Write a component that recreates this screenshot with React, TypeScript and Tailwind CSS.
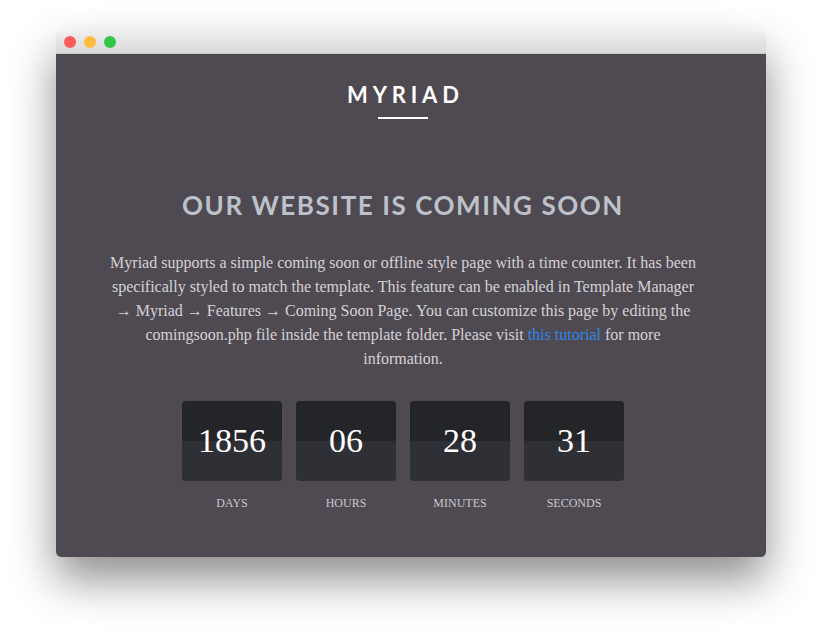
const counters = [
  { value: "1856", label: "Days" },
  { value: "06", label: "Hours" },
  { value: "28", label: "Minutes" },
  { value: "31", label: "Seconds" },
];

function CounterBox({ value, label }: { value: string; label: string }) {
  return (
    <div className="flex flex-col items-center">
      <div className="relative w-[100px] h-[80px] rounded-[4px] overflow-hidden flex flex-col">
        <div className="h-[40px] bg-[#242528]" />
        <div className="h-[40px] bg-[#2f3035]" />
        <span className="absolute inset-0 flex items-center justify-center text-white text-[34px] leading-none font-['Liberation_Serif',serif]">
          {value}
        </span>
      </div>
      <span className="mt-[13px] text-[12px] uppercase text-[#c9c8cd] font-['Liberation_Serif',serif]">
        {label}
      </span>
    </div>
  );
}

export default function App() {
  return (
    <div className="w-[822px] h-[637px] bg-white pl-[56px] pt-[31px]">
      <div className="w-[710px] h-[526px] rounded-[5px] overflow-hidden shadow-[0_22px_45px_rgba(0,0,0,0.45)] flex flex-col">
        {/* title bar */}
        <div className="h-[23px] bg-gradient-to-b from-[#efefef] to-[#d9d9d9] flex items-center gap-[8px] pl-[8px] border-b border-[#c8c8c8]">
          <span className="w-[12px] h-[12px] rounded-full bg-[#fc5b57]" />
          <span className="w-[12px] h-[12px] rounded-full bg-[#fdbc40]" />
          <span className="w-[12px] h-[12px] rounded-full bg-[#33c748]" />
        </div>

        {/* page */}
        <div className="flex-1 bg-[#4f4a51] flex flex-col items-center pt-[27px] pr-[16px]">
          <h1 className="text-white text-[22px] leading-[28px] font-bold tracking-[0.22em] pl-[0.22em] font-['Lato',sans-serif]">
            MYRIAD
          </h1>
          <div className="mt-[8px] w-[50px] h-[2px] bg-white" />

          <h2 className="mt-[70px] text-[#bdc1c9] text-[26px] leading-[32px] font-bold tracking-[0.06em] font-['Lato',sans-serif]">
            OUR WEBSITE IS COMING SOON
          </h2>

          <p className="mt-[30px] w-[660px] text-center text-[16px] leading-[24px] text-[#d4d2d6] font-['Liberation_Serif',serif] whitespace-nowrap">
            Myriad supports a simple coming soon or offline style page with a time counter. It has been
            <br />
            specifically styled to match the template. This feature can be enabled in Template Manager
            <br />→ Myriad → Features → Coming Soon Page. You can customize this page by editing the
            <br />
            comingsoon.php file inside the template folder. Please visit{" "}
            <a className="text-[#2f86e8]">this tutorial</a> for more
            <br />
            information.
          </p>

          <div className="mt-[30px] flex gap-[14px]">
            {counters.map((c) => (
              <CounterBox key={c.label} value={c.value} label={c.label} />
            ))}
          </div>
        </div>
      </div>
    </div>
  );
}
